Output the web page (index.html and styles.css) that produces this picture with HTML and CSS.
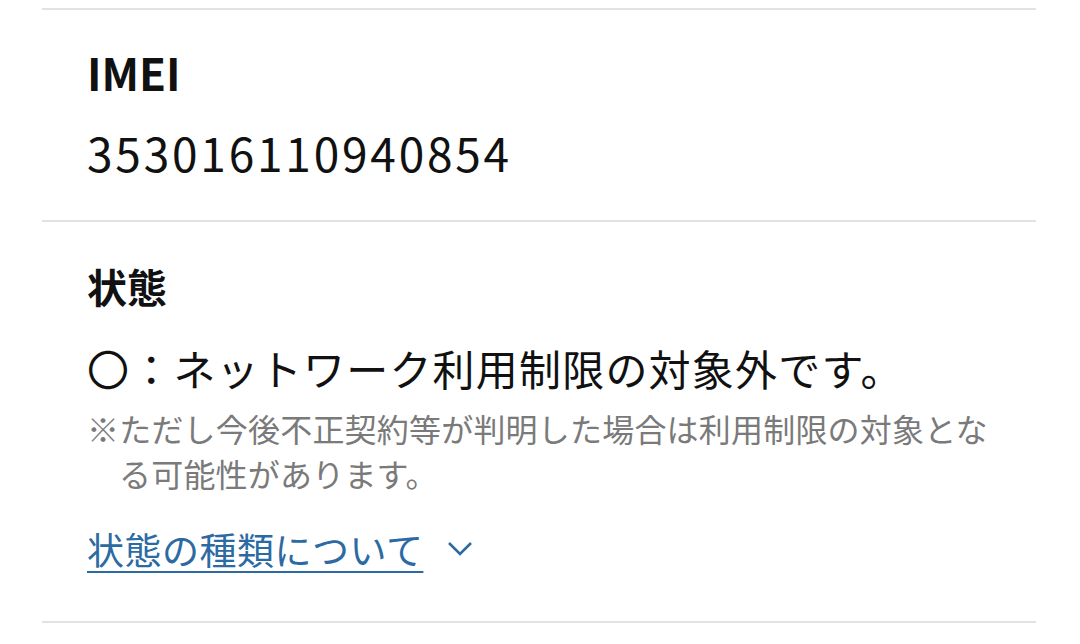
FILE: index.html
```html
<!DOCTYPE html>
<html lang="ja">
<head>
    <meta charset="UTF-8">
    <meta name="viewport" content="width=device-width, initial-scale=1.0">
    <title>ネットワーク利用制限</title>
    <link rel="stylesheet" href="styles.css">
</head>
<body>

    <div class="result-list">
        <!-- IMEI -->
        <div class="result-item">
            <h3 class="item-title">IMEI</h3>
            <p class="item-value imei">353016110940854</p>
        </div>

        <!-- 状態 -->
        <div class="result-item status">
            <h3 class="item-title jp">状態</h3>
            <p class="item-value">〇：ネットワーク利用制限の対象外です。</p>
            <p class="note">※ただし今後不正契約等が判明した場合は利用制限の対象となる可能性があります。</p>
            <div class="toggle">
                <a href="#" class="toggle-link">状態の種類について</a>
                <svg class="chevron" width="26" height="18" viewBox="0 0 26 18">
                    <polyline points="2,3 13,14 24,3" fill="none" stroke="#2c6aa3" stroke-width="2.6"/>
                </svg>
            </div>
        </div>
    </div>

</body>
</html>
```

FILE: styles.css
```css
body {
    margin: 0;
    background: #fff;
    color: #111;
    font-family: "Noto Sans CJK JP", "Noto Sans", sans-serif;
}

.result-list {
    margin: 8px 44px 0 42px;
    border-bottom: 2px solid #e2e2e2;
}

.result-item {
    border-top: 2px solid #e2e2e2;
    padding: 34px 0 40px 45px;
}

.item-title {
    margin: 0;
    font-size: 44px;
    line-height: 56px;
    font-weight: 700;
}

.item-value {
    margin: 24px 0 0;
    font-size: 46px;
    line-height: 56px;
    font-weight: 400;
}

.imei {
    letter-spacing: 2.8px;
}

.status {
    padding-top: 36px;
    padding-bottom: 44px;
}

.item-title.jp {
    font-size: 40px;
}

.status .item-value {
    margin-top: 26px;
    font-size: 42px;
    letter-spacing: 1.2px;
}

.note {
    margin: 10px 0 0;
    font-size: 32px;
    line-height: 45px;
    letter-spacing: 0.2px;
    color: #7a7a7a;
    padding-left: 1em;
    text-indent: -1em;
    padding-right: 40px;
}

.toggle {
    margin-top: 25px;
    display: flex;
    align-items: center;
    gap: 24px;
    height: 56px;
}

.toggle-link {
    font-size: 37px;
    line-height: 56px;
    letter-spacing: 0.5px;
    color: #2c6aa3;
    text-decoration: underline;
    text-decoration-thickness: 2px;
    text-underline-offset: 6px;
}

.chevron {
    display: block;
}
```
